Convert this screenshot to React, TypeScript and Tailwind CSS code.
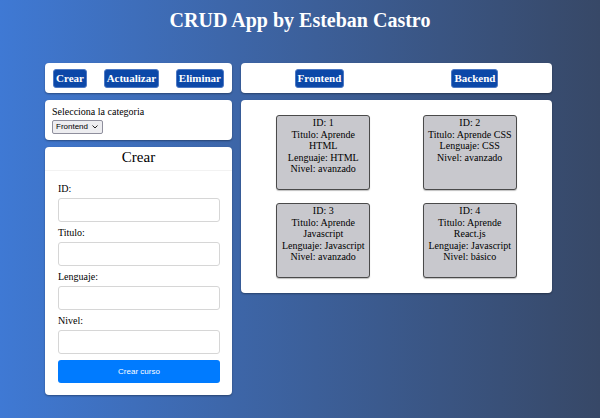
const cursos = [
  { id: 1, titulo: 'Aprende HTML', lenguaje: 'HTML', nivel: 'avanzado' },
  { id: 2, titulo: 'Aprende CSS', lenguaje: 'CSS', nivel: 'avanzado' },
  { id: 3, titulo: 'Aprende Javascript', lenguaje: 'Javascript', nivel: 'avanzado' },
  { id: 4, titulo: 'Aprende React.js', lenguaje: 'Javascript', nivel: 'básico' },
];

const campos = ['ID:', 'Titulo:', 'Lenguaje:', 'Nivel:'];

function NavButton({ children }: { children: React.ReactNode }) {
  return (
    <button className="h-[19px] px-[2px] bg-[#0c48a8] border border-[#4d79c4] rounded-[3px] text-white text-[11px] font-bold leading-none font-['Liberation_Serif',serif]">
      {children}
    </button>
  );
}

export default function App() {
  return (
    <div className="min-h-[418px] bg-gradient-to-r from-[#3f79d4] to-[#374867] font-['Liberation_Serif',serif] text-black">
      <h1 className="pt-[9px] text-center text-[20px] leading-[23px] font-bold text-white font-['Liberation_Serif',serif]">
        CRUD App by Esteban Castro
      </h1>

      <div className="mt-[31px] ml-[45px] flex items-start gap-[9px]">
        {/* Left column */}
        <div className="w-[187px] flex flex-col gap-[7px]">
          <div className="bg-white rounded-[4px] shadow-[0_1px_2px_rgba(0,0,0,0.35)] flex justify-between px-[8px] pt-[6px] pb-[5px]">
            <NavButton>Crear</NavButton>
            <NavButton>Actualizar</NavButton>
            <NavButton>Eliminar</NavButton>
          </div>

          <div className="bg-white rounded-[4px] shadow-[0_1px_2px_rgba(0,0,0,0.35)] px-[7px] pt-[6px] pb-[6px]">
            <p className="text-[10px] leading-[12px] font-['Liberation_Serif',serif]">Selecciona la categoria</p>
            <div className="mt-[2px] flex w-fit items-center h-[14px] pl-[3px] pr-[4px] gap-[4px] bg-[#ededf0] border border-[#8f8f9d] rounded-[2px] font-['Liberation_Sans',sans-serif] text-[8px] leading-none">
              <span>Frontend</span>
              <svg width="6" height="4" viewBox="0 0 6 4" fill="none">
                <path d="M0.5 0.5L3 3L5.5 0.5" stroke="#222" strokeWidth="1" />
              </svg>
            </div>
          </div>

          <div className="bg-white rounded-[4px] shadow-[0_1px_2px_rgba(0,0,0,0.35)]">
            <h2 className="pt-[2px] pb-[4px] text-center text-[15px] leading-[17px] border-b border-[#f2f2f2] font-['Liberation_Serif',serif]">
              Crear
            </h2>
            <div className="pl-[13px] pr-[12px] pt-[12px] pb-[12px]">
              {campos.map((campo, idx) => (
                <div key={campo} className={idx > 0 ? 'mt-[5px]' : ''}>
                  <label className="block text-[10px] leading-[12px] font-['Liberation_Serif',serif]">{campo}</label>
                  <input
                    type="text"
                    className="mt-[3px] block w-full h-[24px] border border-[#d6d6d6] rounded-[3px] bg-white"
                  />
                </div>
              ))}
              <button className="mt-[6px] w-full h-[23px] bg-[#007bff] rounded-[3px] text-white text-[8px] font-['Liberation_Sans',sans-serif]">
                Crear curso
              </button>
            </div>
          </div>
        </div>

        {/* Right column */}
        <div className="w-[311px] flex flex-col gap-[7px]">
          <div className="bg-white rounded-[4px] shadow-[0_1px_2px_rgba(0,0,0,0.35)] flex justify-around pt-[6px] pb-[5px]">
            <NavButton>Frontend</NavButton>
            <NavButton>Backend</NavButton>
          </div>

          <div className="bg-white rounded-[4px] shadow-[0_1px_2px_rgba(0,0,0,0.35)] grid grid-cols-2 gap-y-[13px] px-[9px] pt-[15px] pb-[15px]">
            {cursos.map((curso) => (
              <div
                key={curso.id}
                className="justify-self-center w-[94px] h-[75px] bg-[#c8c8cd] border border-[#4a4a4a] rounded-[3px] shadow-[0_1px_1px_rgba(0,0,0,0.25)] px-[1px] pt-[1px] text-center text-[10px] leading-[11.5px] font-['Liberation_Serif',serif]"
              >
                <div>ID: {curso.id}</div>
                <div>Titulo: {curso.titulo}</div>
                <div>Lenguaje: {curso.lenguaje}</div>
                <div>Nivel: {curso.nivel}</div>
              </div>
            ))}
          </div>
        </div>
      </div>
    </div>
  );
}
